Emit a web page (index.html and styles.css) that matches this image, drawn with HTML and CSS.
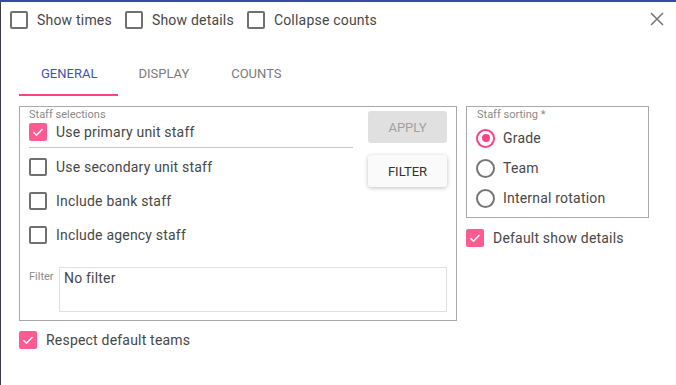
FILE: index.html
```html
<!DOCTYPE html>
<html lang="en">
<head>
  <meta charset="UTF-8" />
  <title>Staff options</title>
  <link rel="stylesheet" href="styles.css">
</head>
<body>
  <div class="dialog">
    <div class="toolbar">
      <label class="check"><span class="box"></span>Show times</label>
      <label class="check"><span class="box"></span>Show details</label>
      <label class="check"><span class="box"></span>Collapse counts</label>
      <button class="close" aria-label="Close">
        <svg width="14" height="14" viewBox="0 0 14 14"><path d="M1 1L13 13M13 1L1 13" stroke="#757575" stroke-width="1.5" fill="none"/></svg>
      </button>
    </div>

    <div class="tabs">
      <div class="tab active">General</div>
      <div class="tab">Display</div>
      <div class="tab">Counts</div>
    </div>

    <div class="content">
      <div class="left-col">
        <div class="group selections">
          <div class="sel-top">
            <div class="sel-list">
              <div class="legend">Staff selections</div>
              <label class="check row primary"><span class="box on"><svg viewBox="0 0 18 18"><path d="M4.5 9.2l3 3 6-6.2" stroke="#fff" stroke-width="1.6" fill="none"/></svg></span>Use primary unit staff</label>
              <label class="check row"><span class="box"></span>Use secondary unit staff</label>
              <label class="check row"><span class="box"></span>Include bank staff</label>
              <label class="check row"><span class="box"></span>Include agency staff</label>
            </div>
            <div class="sel-buttons">
              <button class="btn disabled">Apply</button>
              <button class="btn raised">Filter</button>
            </div>
          </div>
          <div class="filter-row">
            <span class="filter-label">Filter</span>
            <div class="filter-box">No filter</div>
          </div>
        </div>
        <label class="check after"><span class="box on"><svg viewBox="0 0 18 18"><path d="M4.5 9.2l3 3 6-6.2" stroke="#fff" stroke-width="1.6" fill="none"/></svg></span>Respect default teams</label>
      </div>

      <div class="right-col">
        <div class="group sorting">
          <div class="legend">Staff sorting *</div>
          <label class="radio"><span class="ring on"></span>Grade</label>
          <label class="radio"><span class="ring"></span>Team</label>
          <label class="radio"><span class="ring"></span>Internal rotation</label>
        </div>
        <label class="check after"><span class="box on"><svg viewBox="0 0 18 18"><path d="M4.5 9.2l3 3 6-6.2" stroke="#fff" stroke-width="1.6" fill="none"/></svg></span>Default show details</label>
      </div>
    </div>
  </div>
</body>
</html>
```

FILE: styles.css
```css
body {
  margin: 0;
  height: 385px;
  overflow: hidden;
  font-family: Roboto, 'Noto Sans', sans-serif;
  background: linear-gradient(#3949ab 0 2px, #3a3d46 2px);
}

.dialog {
  margin: 2px 0 0 1px;
  height: 383px;
  background: #fff;
  color: #474747;
  font-size: 14px;
  letter-spacing: 0.2px;
}

/* top checkbox bar */
.toolbar {
  display: flex;
  align-items: flex-start;
  height: 46px;
  box-sizing: border-box;
  padding: 9px 12px 0 9px;
}

.toolbar .check {
  margin-right: 13px;
}

.check {
  display: flex;
  align-items: center;
  line-height: 18px;
  white-space: nowrap;
}

.box {
  width: 18px;
  height: 18px;
  box-sizing: border-box;
  border: 2px solid #707070;
  border-radius: 2px;
  margin-right: 9px;
  flex: none;
}

.box.on {
  background: #ff5a91;
  border-color: #ff5a91;
  position: relative;
}

.box.on svg {
  position: absolute;
  left: -2px;
  top: -2px;
  width: 18px;
  height: 18px;
}

.close {
  margin-left: auto;
  margin-top: 1px;
  background: none;
  border: none;
  padding: 0;
  width: 14px;
  height: 14px;
}

/* tabs */
.tabs {
  display: flex;
  padding-left: 18px;
}

.tab {
  height: 48px;
  box-sizing: border-box;
  padding: 16px 21px 0 22px;
  line-height: 20px;
  font-size: 13px;
  letter-spacing: 0;
  text-transform: uppercase;
  color: #7a7a7a;
  border-bottom: 2px solid transparent;
}

.tab.active {
  color: #3f51b5;
  border-bottom-color: #ff4081;
}

.tab + .tab {
  padding: 16px 22px 0 20px;
}

/* content */
.content {
  display: flex;
  gap: 9px;
  padding: 10px 0 0 18px;
  align-items: flex-start;
}

.group {
  border: 1px solid #a9a9a9;
  box-sizing: border-box;
}

.legend {
  font-size: 11px;
  line-height: 11px;
  letter-spacing: 0;
  color: #8a8a8a;
}

.selections {
  width: 438px;
  padding: 2px 9px 8px 9px;
}

.sel-top {
  display: flex;
}

.sel-list {
  width: 326px;
}

.row {
  height: 34px;
}

.row.primary {
  height: auto;
  align-items: flex-start;
  padding: 3px 0 6px;
  border-bottom: 1px solid #c6c6c6;
  margin-bottom: 2px;
}

.sel-buttons {
  display: flex;
  flex-direction: column;
  gap: 12px;
  margin-left: 15px;
  padding-top: 2px;
}

.btn {
  width: 79px;
  height: 32px;
  border: none;
  border-radius: 3px;
  font-family: Roboto, sans-serif;
  font-size: 13px;
  text-transform: uppercase;
}

.btn.disabled {
  background: #e0e0e0;
  color: #a0a0a0;
}

.btn.raised {
  background: #fafafa;
  color: #333;
  box-shadow: 0 1px 4px rgba(0,0,0,0.25);
}

.filter-row {
  display: flex;
  margin-top: 15px;
}

.filter-label {
  width: 30px;
  font-size: 11px;
  letter-spacing: 0;
  color: #8a8a8a;
  padding-top: 3px;
}

.filter-box {
  flex: 1;
  height: 45px;
  box-sizing: border-box;
  border: 1px solid #e0e0e0;
  padding: 1px 4px;
  line-height: 18px;
}

.left-col .after {
  margin-top: 10px;
}

.right-col .after {
  margin-top: 11px;
}

/* sorting */
.sorting {
  width: 183px;
  height: 112px;
  padding: 2px 10px 0 10px;
}

.sorting .legend {
  margin-bottom: 3px;
}

.radio {
  display: flex;
  align-items: center;
  height: 30px;
}

.ring {
  width: 19px;
  height: 19px;
  box-sizing: border-box;
  border: 2px solid #757575;
  border-radius: 50%;
  margin: 0 8px 0 -1px;
  position: relative;
}

.ring.on {
  border-color: #ff4081;
}

.ring.on::after {
  content: "";
  position: absolute;
  left: 3.5px;
  top: 3.5px;
  width: 8px;
  height: 8px;
  border-radius: 50%;
  background: #ff4081;
}
```
